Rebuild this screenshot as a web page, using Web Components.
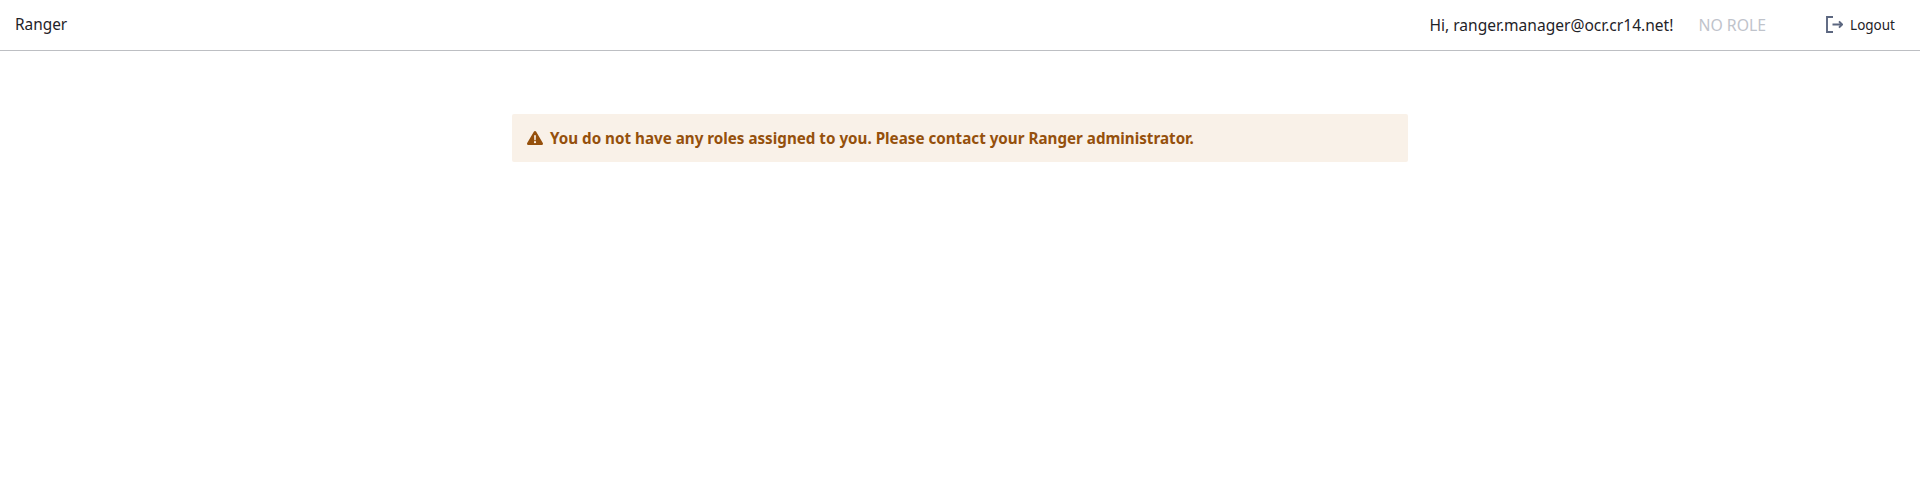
<!DOCTYPE html>
<html>
<head>
<meta charset="utf-8">
<title>Ranger</title>
<style>
    body {
        margin: 0;
        background: #fff;
        font-family: "Noto Sans", "Open Sans", sans-serif;
        color: #1f2328;
    }
</style>
</head>
<body>
<ranger-app>
    <ranger-header user="ranger.manager@ocr.cr14.net" role="NO ROLE"></ranger-header>
    <ranger-alert>You do not have any roles assigned to you. Please contact your Ranger administrator.</ranger-alert>
</ranger-app>

<script>
class RangerApp extends HTMLElement {
    constructor() {
        super();
        this.attachShadow({ mode: 'open' });
        this.shadowRoot.innerHTML = `
            <style>
                :host {
                    display: flex;
                    flex-direction: column;
                    min-height: 100vh;
                }
            </style>
            <slot></slot>
        `;
    }
}

class RangerHeader extends HTMLElement {
    constructor() {
        super();
        this.attachShadow({ mode: 'open' });

        const user = this.getAttribute('user') || '';
        const role = this.getAttribute('role') || '';

        this.shadowRoot.innerHTML = `
            <style>
                :host {
                    display: flex;
                    align-items: center;
                    justify-content: space-between;
                    box-sizing: border-box;
                    height: 51px;
                    padding: 0 25px 1px 15px;
                    border-bottom: 1px solid #bdbfc3;
                    font-size: 15.4px;
                }
                .right {
                    display: flex;
                    align-items: center;
                }
                .hi {
                    font-size: 15.55px;
                }
                .role {
                    margin-left: 25px;
                    color: #bfc3cb;
                    font-size: 15.8px;
                }
                .logout {
                    display: flex;
                    align-items: center;
                    gap: 7px;
                    margin-left: 60px;
                    font-size: 13.5px;
                }
                svg {
                    display: block;
                }
            </style>
            <div>Ranger</div>
            <div class="right">
                <span class="hi">Hi, ${user}!</span>
                <span class="role">${role}</span>
                <span class="logout">
                    <svg width="17" height="17" viewBox="0 0 17 17" fill="none" stroke="#5c6780" stroke-width="1.9">
                        <path d="M7 1H1V16H7"/>
                        <path d="M6.5 8.5H16M13 5.3L16.2 8.5L13 11.7"/>
                    </svg>
                    <span>Logout</span>
                </span>
            </div>
        `;
    }
}

class RangerAlert extends HTMLElement {
    constructor() {
        super();
        this.attachShadow({ mode: 'open' });
        this.shadowRoot.innerHTML = `
            <style>
                :host {
                    display: flex;
                    align-items: center;
                    gap: 7px;
                    box-sizing: border-box;
                    width: 896px;
                    height: 48px;
                    margin: 63px auto 0;
                    padding: 0 15px;
                    border-radius: 2px;
                    background: #f9f1e8;
                    color: #95500c;
                    font-size: 15.2px;
                    font-weight: 700;
                }
                svg {
                    display: block;
                    flex: none;
                }
            </style>
            <svg width="16" height="14" viewBox="0 0 16 14">
                <path fill="#95500c" fill-rule="evenodd" d="M8 0c.5 0 .9.3 1.2.7l6.6 11.4c.5.9-.1 1.9-1.1 1.9H1.3C.3 14-.3 13 .2 12.1L6.8.7C7.1.3 7.5 0 8 0ZM7.1 4.2l.2 5h1.4l.2-5H7.1ZM8 10.1a1.1 1.1 0 1 0 0 2.2 1.1 1.1 0 0 0 0-2.2Z"/>
            </svg>
            <span><slot></slot></span>
        `;
    }
}

customElements.define('ranger-app', RangerApp);
customElements.define('ranger-header', RangerHeader);
customElements.define('ranger-alert', RangerAlert);
</script>
</body>
</html>
